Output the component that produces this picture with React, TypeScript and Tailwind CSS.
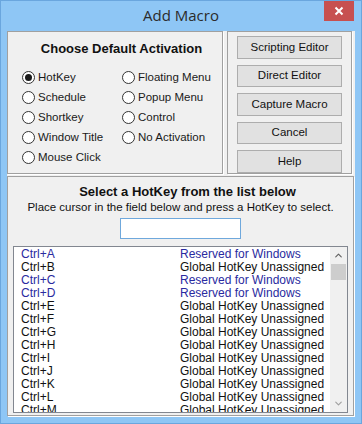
import { ChevronUp, ChevronDown } from 'lucide-react'

const font = { fontFamily: '"Liberation Sans", Arial, sans-serif' }

const leftRadios = ['HotKey', 'Schedule', 'Shortkey', 'Window Title', 'Mouse Click']
const rightRadios = ['Floating Menu', 'Popup Menu', 'Control', 'No Activation']
const buttons = ['Scripting Editor', 'Direct Editor', 'Capture Macro', 'Cancel', 'Help']

const rows: [string, boolean][] = [
    ['Ctrl+A', true],
    ['Ctrl+B', false],
    ['Ctrl+C', true],
    ['Ctrl+D', true],
    ['Ctrl+E', false],
    ['Ctrl+F', false],
    ['Ctrl+G', false],
    ['Ctrl+H', false],
    ['Ctrl+I', false],
    ['Ctrl+J', false],
    ['Ctrl+K', false],
    ['Ctrl+L', false],
    ['Ctrl+M', false],
]

function Radio({ label, checked }: { label: string; checked?: boolean }) {
    return (
        <div className="flex items-center h-[20px] text-[11.5px] text-[#1a1a1a]">
            <span className="w-[13px] h-[13px] rounded-full border border-[#333] bg-white flex items-center justify-center mr-[3px]">
                {checked && <span className="w-[7px] h-[7px] rounded-full bg-[#1a1a1a]" />}
            </span>
            {label}
        </div>
    )
}

export default function App() {
    return (
        <div
            className="w-[362px] h-[424px] bg-[#8ec6f5] border border-[#6aa6de] flex flex-col overflow-hidden"
            style={font}
        >
            {/* Title bar */}
            <div className="relative h-[30px] shrink-0 flex items-center justify-center">
                <span
                    className="text-[15px] text-[#2b2b2b] -mt-[1px]"
                    style={{ fontFamily: '"Open Sans", "Noto Sans", sans-serif' }}
                >
                    Add Macro
                </span>
                <div className="absolute top-0 right-[7px] w-[30px] h-[20px] bg-[#c75050] flex items-center justify-center">
                    <svg width="10" height="10" viewBox="0 0 10 10">
                        <path d="M1.5 1.5 L8.5 8.5 M8.5 1.5 L1.5 8.5" stroke="#fff" strokeWidth="2" />
                    </svg>
                </div>
            </div>

            {/* Client area */}
            <div className="mx-[6px] h-[385px] bg-[#f0f0f0] flex flex-col gap-[2px] shrink-0">
                <div className="flex gap-[4px] h-[143px]">
                    {/* Default activation */}
                    <div className="w-[216px] border border-[#a0a0a0] shadow-[1px_1px_0_0_#fff] flex flex-col">
                        <div className="text-center font-bold text-[13px] text-[#111] mt-[7px] pl-[13px]">
                            Choose Default Activation
                        </div>
                        <div className="flex mt-[9px] pl-[14px]">
                            <div className="w-[100px] flex flex-col">
                                {leftRadios.map((r, i) => (
                                    <Radio key={r} label={r} checked={i === 0} />
                                ))}
                            </div>
                            <div className="flex flex-col">
                                {rightRadios.map((r) => (
                                    <Radio key={r} label={r} />
                                ))}
                            </div>
                        </div>
                    </div>

                    {/* Buttons */}
                    <div className="w-[125px] border border-[#a0a0a0] shadow-[1px_1px_0_0_#fff] flex flex-col gap-[6px] pt-[4px] pl-[9px]">
                        {buttons.map((b) => (
                            <div
                                key={b}
                                className="w-[105px] h-[23px] bg-[#e1e1e1] border border-[#adadad] flex items-center justify-center text-[11.5px] text-[#111]"
                            >
                                {b}
                            </div>
                        ))}
                    </div>
                </div>

                {/* Hotkey list panel */}
                <div className="h-[240px] mr-[1px] border border-[#a0a0a0] shadow-[1px_1px_0_0_#fff] flex flex-col items-center">
                    <div className="font-bold text-[13px] text-[#111] mt-[7px] leading-[16px] pl-[14px]">
                        Select a HotKey from the list below
                    </div>
                    <div className="text-[11.5px] text-[#111] leading-[15px]">
                        Place cursor in the field below and press a HotKey to select.
                    </div>
                    <div className="w-[121px] h-[21px] bg-white border border-[#6fa8dc] mt-[3px]" />
                    <div className="self-stretch mx-[5px] mt-[7px] h-[167px] border border-[#828790] bg-white flex overflow-hidden">
                        <div className="flex-1 pt-[1px] pl-[7px] text-[12px]">
                            {rows.map(([k, res]) => (
                                <div
                                    key={k}
                                    className={`flex h-[13px] leading-[13px] ${res ? 'text-[#2a2aa0]' : 'text-[#111]'}`}
                                >
                                    <span className="w-[159px]">{k}</span>
                                    <span>{res ? 'Reserved for Windows' : 'Global HotKey Unassigned'}</span>
                                </div>
                            ))}
                        </div>
                        <div className="w-[17px] bg-[#f0f0f0] flex flex-col items-center">
                            <div className="h-[17px] flex items-center justify-center text-[#606060]">
                                <ChevronUp size={11} strokeWidth={2.5} />
                            </div>
                            <div className="w-[15px] h-[16px] bg-[#cdcdcd]" />
                            <div className="flex-1" />
                            <div className="h-[17px] flex items-center justify-center text-[#a0a0a0]">
                                <ChevronDown size={11} strokeWidth={2.5} />
                            </div>
                        </div>
                    </div>
                </div>
            </div>
        </div>
    )
}
